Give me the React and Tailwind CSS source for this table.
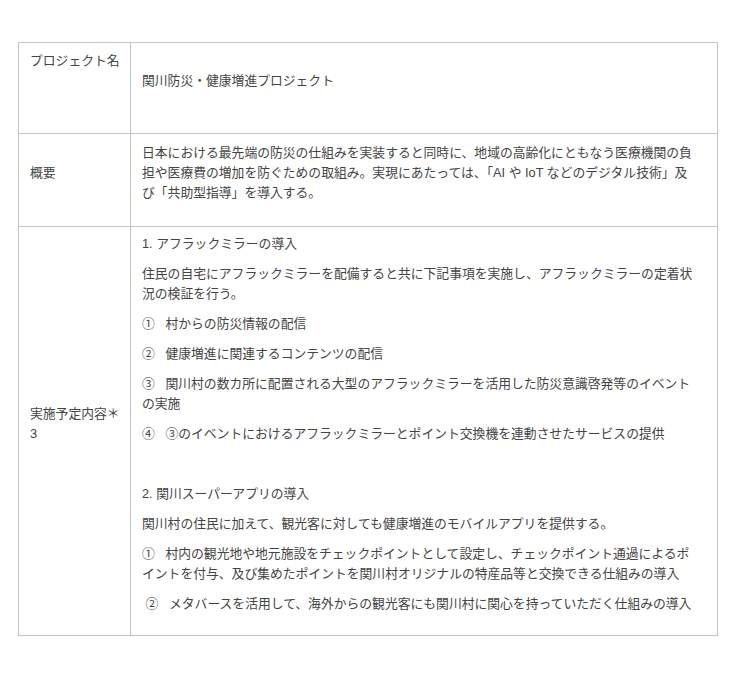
import React from 'react';

const rows = [
  {
    label: 'プロジェクト名',
    top: true,
    content: [['関川防災・健康増進プロジェクト']],
  },
  {
    label: '概要',
    content: [[
      '日本における最先端の防災の仕組みを実装すると同時に、地域の高齢化にともなう医療機関の負担や医療費の増加を防ぐための取組み。実現にあたっては、「AI や IoT などのデジタル技術」及び「共助型指導」を導入する。',
    ]],
  },
  {
    label: ['実施予定内容＊', '3'],
    content: [
      ['1. アフラックミラーの導入'],
      ['住民の自宅にアフラックミラーを配備すると共に下記事項を実施し、アフラックミラーの定着状況の検証を行う。'],
      ['①\u00a0\u00a0\u00a0村からの防災情報の配信'],
      ['②\u00a0\u00a0\u00a0健康増進に関連するコンテンツの配信'],
      ['③\u00a0\u00a0\u00a0関川村の数カ所に配置される大型のアフラックミラーを活用した防災意識啓発等のイベントの実施'],
      ['④\u00a0\u00a0\u00a0③のイベントにおけるアフラックミラーとポイント交換機を連動させたサービスの提供'],
      [''],
      ['2. 関川スーパーアプリの導入'],
      ['関川村の住民に加えて、観光客に対しても健康増進のモバイルアプリを提供する。'],
      ['①\u00a0\u00a0\u00a0村内の観光地や地元施設をチェックポイントとして設定し、チェックポイント通過によるポイントを付与、及び集めたポイントを関川村オリジナルの特産品等と交換できる仕組みの導入'],
      ['\u00a0②\u00a0\u00a0\u00a0メタバースを活用して、海外からの観光客にも関川村に関心を持っていただく仕組みの導入'],
    ],
  },
];

const heights = ['h-[91px]', 'h-[93px]', 'h-[408px]'];

export default function App() {
  return (
    <div className="min-h-screen bg-white pt-[42px] pl-[18px] font-['Liberation_Sans','Noto_Sans_CJK_JP',sans-serif] text-[12.8px] leading-[20px] text-[#444]">
      <div className="w-[700px] border border-[#c4c4c4]">
        {rows.map((row, i) => (
          <div
            key={i}
            className={`flex ${heights[i]} ${i < rows.length - 1 ? 'border-b border-[#c4c4c4]' : ''}`}
          >
            {/* label cell */}
            <div
              className={`w-[112px] shrink-0 border-r border-[#c4c4c4] pl-[11px] pr-[8px] flex ${
                row.top ? 'items-start pt-[8px]' : 'items-center pt-[7px] pb-[21px]'
              }`}
            >
              <div>
                {Array.isArray(row.label)
                  ? row.label.map((l, k) => <div key={k}>{l}</div>)
                  : row.label}
              </div>
            </div>

            {/* content cell */}
            <div className="flex-1 pl-[11px] pr-[18px] pt-[7px] pb-[21px] flex items-center">
              <div className="flex w-full flex-col gap-[10px]">
                {row.content.map((p, k) => (
                  <p key={k} className="min-h-[20px]">
                    {p[0]}
                  </p>
                ))}
              </div>
            </div>
          </div>
        ))}
      </div>
    </div>
  );
}
